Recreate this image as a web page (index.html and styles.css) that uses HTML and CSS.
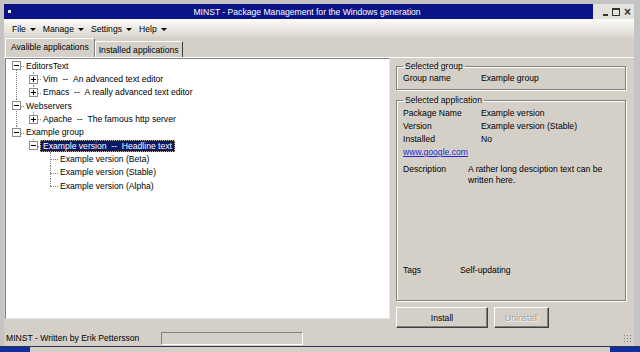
FILE: index.html
```html
<!DOCTYPE html>
<html lang="en">
<head>
    <meta charset="UTF-8">
    <title>MINST - Package Management for the Windows generation</title>
    <link rel="stylesheet" href="styles.css">
</head>
<body>
    <div class="screen">
        <div class="window">
            <!-- Barra de titulo -->
            <div class="titlebar">
                <div class="caption">
                    <span class="sysicon"></span>
                    <span class="title">MINST - Package Management for the Windows generation</span>
                </div>
                <div class="caption-btns">
                    <span class="cbtn min"></span>
                    <span class="cbtn box"></span>
                    <span class="cbtn x">&#215;</span>
                </div>
            </div>

            <div class="menubar">
                <span class="menu">File <i class="arrow"></i></span>
                <span class="menu">Manage <i class="arrow"></i></span>
                <span class="menu">Settings <i class="arrow"></i></span>
                <span class="menu">Help <i class="arrow"></i></span>
            </div>

            <div class="tabs">
                <span class="tab active">Avalible applications</span>
                <span class="tab">Installed applications</span>
            </div>

            <div class="content">
                <div class="tree">
                    <ul class="nodes root">
                        <li>
                            <div class="row"><span class="exp minus"></span><span class="label">EditorsText</span></div>
                            <ul class="nodes">
                                <li><div class="row"><span class="exp plus"></span><span class="label">Vim &nbsp;-- &nbsp;An advanced text editor</span></div></li>
                                <li><div class="row"><span class="exp plus"></span><span class="label">Emacs &nbsp;-- &nbsp;A really advanced text editor</span></div></li>
                            </ul>
                        </li>
                        <li>
                            <div class="row"><span class="exp minus"></span><span class="label">Webservers</span></div>
                            <ul class="nodes">
                                <li><div class="row"><span class="exp plus"></span><span class="label">Apache &nbsp;-- &nbsp;The famous http server</span></div></li>
                            </ul>
                        </li>
                        <li>
                            <div class="row"><span class="exp minus"></span><span class="label">Example group</span></div>
                            <ul class="nodes">
                                <li>
                                    <div class="row"><span class="exp minus"></span><span class="label selected">Example version &nbsp;-- &nbsp;Headline text</span></div>
                                    <ul class="nodes">
                                        <li><div class="row leaf"><span class="label">Example version (Beta)</span></div></li>
                                        <li><div class="row leaf"><span class="label">Example version (Stable)</span></div></li>
                                        <li><div class="row leaf"><span class="label">Example version (Alpha)</span></div></li>
                                    </ul>
                                </li>
                            </ul>
                        </li>
                    </ul>
                </div>

                <div class="side">
                    <fieldset class="group">
                        <legend>Selected group</legend>
                        <div class="field"><span class="key">Group name</span><span class="val">Example group</span></div>
                    </fieldset>

                    <fieldset class="group app">
                        <legend>Selected application</legend>
                        <div class="field"><span class="key">Package Name</span><span class="val">Example version</span></div>
                        <div class="field"><span class="key">Version</span><span class="val">Example version (Stable)</span></div>
                        <div class="field"><span class="key">Installed</span><span class="val">No</span></div>
                        <div class="field"><a class="link" href="#">www.google.com</a></div>
                        <div class="field desc"><span class="key">Description</span><span class="val">A rather long desciption text can be written here.</span></div>
                        <div class="field tags"><span class="key">Tags</span><span class="val">Self-updating</span></div>
                    </fieldset>

                    <div class="buttons">
                        <button class="btn install">Install</button>
                        <button class="btn uninstall" disabled>Uninstall</button>
                    </div>
                </div>
            </div>

            <div class="statusbar">
                <span class="status-text">MINST - Written by Erik Pettersson</span>
                <span class="status-panel"></span>
                <span class="grip"></span>
            </div>
        </div>
        <div class="taskbar">
            <span class="task-start"></span>
            <span class="task-end"></span>
        </div>
    </div>
</body>
</html>
```

FILE: styles.css
```css
body {
    margin: 0;
    font-family: "Liberation Sans", Arial, sans-serif;
    font-size: 8.6px;
    color: #000;
}

.screen {
    width: 640px;
    height: 352px;
    background: #c4c4c4;
    display: flex;
    flex-direction: column;
    overflow: hidden;
}

.window {
    margin: 4px 6px 0 4px;
    height: 342px;
    flex-shrink: 0;
    background: #d4d0c8;
    display: flex;
    flex-direction: column;
}

/* Barra de titulo */
.titlebar {
    height: 15px;
    flex-shrink: 0;
    display: flex;
}

.caption {
    flex: 1;
    background: #0a1486;
    display: flex;
    align-items: center;
}

.sysicon {
    width: 3px;
    height: 3px;
    background: #e8e8f0;
    margin-left: 4px;
}

.title {
    color: #fff;
    flex: 1;
    text-align: center;
    padding-left: 10px;
}

.caption-btns {
    width: 38px;
    background: #e4e2dc;
    display: flex;
    align-items: center;
    justify-content: flex-end;
    gap: 4px;
    padding-right: 3px;
}

.cbtn {
    color: #333;
    width: 7px;
    text-align: center;
}

.cbtn.min {
    height: 2px;
    width: 5px;
    background: #333;
    margin-top: 6px;
}

.cbtn.box {
    width: 6px;
    height: 5px;
    border: 1px solid #333;
    border-top-width: 2px;
}

.cbtn.x {
    font-size: 12px;
    font-weight: bold;
    line-height: 10px;
}

/* Menu */
.menubar {
    height: 18px;
    flex-shrink: 0;
    display: flex;
    align-items: center;
    padding: 1px 0 0 8px;
    box-sizing: border-box;
    gap: 7px;
    background: linear-gradient(#fbfbf9, #dcd8d0);
}

.menu {
    display: flex;
    align-items: center;
    gap: 4px;
}

.arrow {
    width: 0;
    height: 0;
    border-left: 3px solid transparent;
    border-right: 3px solid transparent;
    border-top: 3px solid #000;
    margin-top: 1px;
}

/* Pestanas */
.tabs {
    height: 20px;
    flex-shrink: 0;
    display: flex;
    align-items: flex-end;
    padding-left: 1px;
}

.tab {
    height: 15px;
    line-height: 16px;
    padding: 0 3px;
    border: 1px solid #fff;
    border-right-color: #404040;
    border-bottom: none;
}

.tab.active {
    height: 18px;
    line-height: 16px;
    padding: 0 5px;
    border-right: 1px solid #808080;
}

/* Contenido */
.content {
    height: 273px;
    flex-shrink: 0;
    display: flex;
    align-items: flex-start;
    border-top: 1px solid #fff;
    padding-left: 1px;
    box-sizing: border-box;
}

.tree {
    width: 385px;
    height: 261px;
    flex-shrink: 0;
    box-sizing: border-box;
    background: #fff;
    border: 1px solid #808080;
    border-right-color: #e8e8e8;
    border-bottom-color: #e8e8e8;
}

.nodes {
    list-style: none;
    margin: 0;
    padding: 0;
}

.nodes .nodes {
    margin-left: 17px;
}

.nodes li {
    position: relative;
}

.nodes li::before {
    content: '';
    position: absolute;
    left: 10px;
    top: 7px;
    width: 8px;
    border-top: 1px dotted #808080;
}

.nodes li::after {
    content: '';
    position: absolute;
    left: 10px;
    top: 0;
    bottom: 0;
    border-left: 1px dotted #808080;
}

.nodes li:last-child::after {
    bottom: auto;
    height: 7px;
}

.root > li:first-child::after {
    top: 7px;
}

.row {
    height: 13.35px;
    display: flex;
    align-items: center;
    padding-left: 6px;
    white-space: nowrap;
}

.row.leaf {
    padding-left: 19px;
}

.exp {
    width: 7px;
    height: 7px;
    border: 1px solid #8c8c8c;
    background: #fff;
    margin-right: 4px;
    position: relative;
    z-index: 1;
}

.exp::before,
.exp::after {
    content: '';
    position: absolute;
    background: #000;
}

.exp::before {
    left: 1px;
    top: 3px;
    width: 5px;
    height: 1px;
}

.exp.plus::after {
    left: 3px;
    top: 1px;
    width: 1px;
    height: 5px;
}

.label {
    padding: 0 1px;
    line-height: 12px;
}

.label.selected {
    background: #0a1a6a;
    color: #fff;
    outline: 1px dotted #d0b060;
    outline-offset: -1px;
    margin-left: -2px;
    padding: 0 3px 0 3px;
}

/* Panel derecho */
.side {
    flex: 1;
    padding: 3px 8px 0 6px;
    display: flex;
    flex-direction: column;
}

.group {
    margin: 0;
    flex-shrink: 0;
    padding: 0 7px 4px 6px;
    border: 1px solid #808080;
    box-shadow: 1px 1px 0 #fff, inset 1px 1px 0 #fff;
}

.group legend {
    padding: 0 2px;
    margin-left: 0;
    line-height: 11px;
}

.field {
    display: flex;
    line-height: 13px;
    height: 13px;
}

.key {
    width: 78px;
    flex-shrink: 0;
}

.group.app {
    margin-top: 5px;
    height: 206px;
    box-sizing: border-box;
    padding-top: 1px;
}

.link {
    color: #1a2ad0;
}

.field.desc {
    margin-top: 5px;
    height: 100px;
    line-height: 11px;
}

.field.desc .key {
    width: 65px;
}

.field.desc .val {
    width: 150px;
}

.field.tags .key {
    width: 57px;
}

.buttons {
    display: flex;
    flex-shrink: 0;
    gap: 6px;
    margin-top: 6px;
}

.btn {
    font-family: inherit;
    font-size: 8.6px;
    height: 21px;
    background: #d4d0c8;
    border: 1px solid;
    border-color: #fff #404040 #404040 #fff;
    box-shadow: inset -1px -1px 0 #808080;
    padding: 0;
}

.btn.install {
    width: 92px;
}

.btn.uninstall {
    width: 55px;
    color: #a0a0a0;
    text-shadow: 1px 1px 0 #fff;
}

/* Barra de estado */
.statusbar {
    height: 16px;
    flex-shrink: 0;
    display: flex;
    align-items: center;
    padding-left: 2px;
}

.status-text {
    width: 155px;
    white-space: nowrap;
}

.status-panel {
    width: 140px;
    height: 11px;
    border: 1px solid;
    border-color: #808080 #fff #fff #808080;
}

.grip {
    margin-left: auto;
    width: 9px;
    height: 9px;
    margin-right: 2px;
    background: radial-gradient(circle, #808080 1px, transparent 1px) 0 0 / 3px 3px;
}

.taskbar {
    flex: 1;
    display: flex;
    background: #d4d0c8;
    border-top: 1px solid #303050;
}

.task-start {
    width: 30px;
    background: #1030a0;
}

.task-end {
    margin-left: auto;
    width: 30px;
    background: #1030a0;
}
```
